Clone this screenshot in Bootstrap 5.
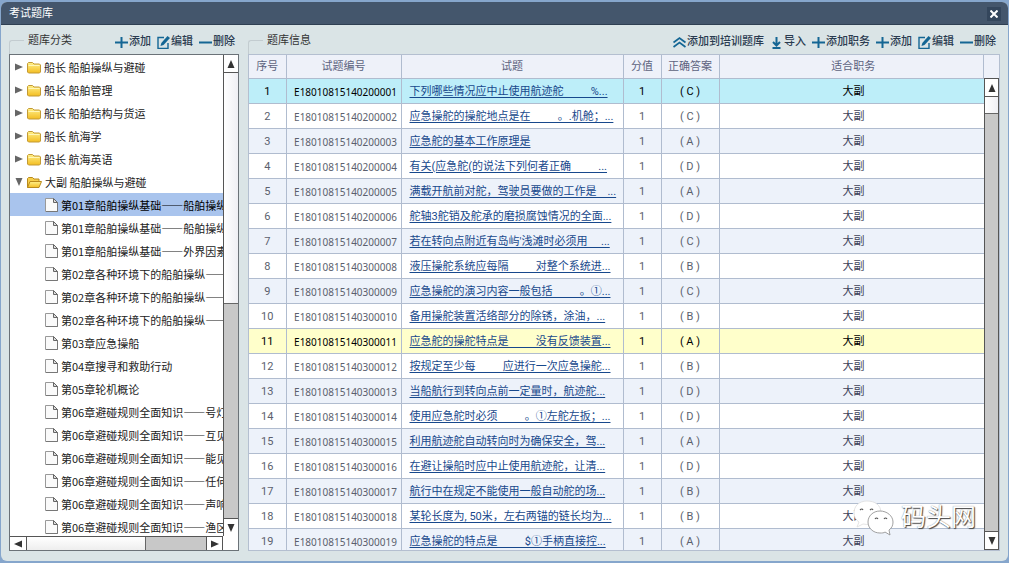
<!DOCTYPE html>
<html lang="zh-CN">
<head>
<meta charset="utf-8">
<meta name="viewport" content="width=device-width, initial-scale=1">
<title>考试题库</title>
<link href="https://cdn.jsdelivr.net/npm/bootstrap@5.3.0/dist/css/bootstrap.min.css" rel="stylesheet">
<style>
  body { font: 11px/22px Roboto, "Noto Sans CJK SC", sans-serif; color: #333; background: #86a6cc; }
  .win { background: #dae4e6; border-radius: 6px; margin: 2px 1px 2px 1px; }
  .titlebar { height: 23px; background: #44566c; border-bottom: 1px solid #2f3f52; border-radius: 6px 6px 0 0; color: #fff; padding: 1px 7px 0 8px; }
  .close-btn { width: 14px; height: 14px; background: #34465c; }
  .work { padding: 5px 8px 10px 8px; gap: 9px; }
  .side { width: 230px; }
  .group-head { height: 24px; padding-right: 4px; }
  .group-edge { width: 15px; height: 14px; border: 1px solid #c3ccd0; border-width: 1px 0 0 1px; border-radius: 3px 0 0 0; margin-top: 10px; margin-right: 4px; }
  .tool { display: flex; align-items: center; gap: 1px; padding: 0; border: 0; background: none; color: #2a3b50; font-weight: 500; line-height: 22px; white-space: nowrap; }
  .tool svg { width: 13px; height: 13px; fill: none; stroke: #146694; stroke-width: 2; }
  .tools { gap: 6px; }
  .tree-box { border: 1px solid #6b7278; background: #fff; }
  .tree { font-family: "Noto Sans CJK SC", sans-serif; }
  .tree a { display: flex; align-items: center; height: 23px; padding-top: 1px; color: #222; text-decoration: none; white-space: nowrap; padding-left: 5px; }
  .tree a.leaf { padding-left: 35px; }
  .tree a.chosen { background: #a9c4ed; color: #000; }
  .tree svg { flex: none; }
  .tree .gutter { margin: 0 3px 0 4px; }
  .tree .label { padding-left: 3px; }
  .sb { background: #c8c8c8; border: 0 solid #555; }
  .sb button { padding: 0; border: 0 solid #555; background: #fff; display: flex; align-items: center; justify-content: center; flex: none; }
  .sb svg { fill: #333; }
  .sb .thumb { border: 0 solid #666; flex: none; }
  .sb-v { width: 15px; border-left-width: 1px; }
  .sb-v button { height: 18px; width: 14px; }
  .sb-v .up, .sb-v .thumb { border-bottom-width: 1px; }
  .sb-v .down { border-top-width: 1px; margin-top: auto; }
  .sb-v .thumb { background: linear-gradient(90deg, #fff, #efeff4); }
  .sb-h { height: 14px; border-top-width: 1px; margin-right: 15px; }
  .sb-h button { width: 17px; height: 13px; }
  .sb-h .lf, .sb-h .thumb { border-right-width: 1px; }
  .sb-h .rt { border-left-width: 1px; border-right-width: 1px; margin-left: auto; }
  .sb-h .thumb { background: linear-gradient(#fff, #eee); width: 56%; }
  .side .sb-v .thumb { height: 48%; }
  .grid-box { border: 1px solid #b4bfd0; background: #fff; }
  .grid-box .sb-v { margin-top: 23px; width: 15px; border-right-width: 1px; border-top-width: 1px; border-bottom-width: 1px; }
  .grid-box .sb-v button { width: 13px; }
  .grid-box .sb-v .thumb { height: 17px; }
  .grid-side { background: #eef1f9; }
  .q { table-layout: fixed; width: 100%; color: #5b5f6d; }
  .q th, .q td { height: 25px; padding: 2px 0 0; text-align: center; border-right: 1px solid #b0bccf; border-bottom: 1px solid #b0bccf; line-height: 22px; white-space: pre; overflow: hidden; font-weight: 400; }
  .q th { height: 23px; line-height: 20px; background: #eef1f9; color: #5d6380; }
  .q td:nth-child(2) { font-family: "Noto Sans", sans-serif; font-size: 10px; padding-left: 4px; }
  .q td:nth-child(3) { text-align: left; padding-left: 8px; }
  .q th:last-child, .q td:last-child { padding-left: 4px; }
  .q td:last-child { border-right: 0; color: #3e4258; }
  .q a { color: #17488c; text-decoration: underline; text-underline-offset: 2px; }
  .q tbody tr:nth-child(odd) { background: #edf2fa; }
  .q tbody tr.current { background: #bdeef9; color: #000; }
  .q tbody tr.hovered { background: #ffffcb; color: #000; }
  .q tr.current td:last-child, .q tr.hovered td:last-child { color: #000; }
  .brand { position: absolute; right: 32px; bottom: 25px; gap: 6px; pointer-events: none; }
  .brand span { font-size: 25px; line-height: 36px; color: #fff; text-shadow: 1px 1px 1px #444, 0 0 1px #777; }
</style>
</head>
<body class="vh-100 overflow-hidden d-flex flex-column">
<svg class="position-absolute" width="0" height="0">
  <symbol id="plus" viewBox="0 0 13 13"><path d="M6.5 1v11M0 6.5h13"/></symbol>
  <symbol id="minus" viewBox="0 0 13 13"><path d="M0 6.5h13"/></symbol>
  <symbol id="edit" viewBox="0 0 13 13"><path stroke-width="1.4" d="M7 1.5H1v11h10V7"/><path fill="#146694" stroke="none" d="M3.5 10l.8-3L10.500 0l2.500 2L6.500 9z"/></symbol>
  <symbol id="chev" viewBox="0 0 13 13"><path stroke-width="1.700" d="M.5 6.500l6-4.500 6 4.500M.5 11l6-4.500 6 4.500"/></symbol>
  <symbol id="down" viewBox="0 0 13 13"><path d="M6.500 1v8M3 6l3.500 3.500L10 6M2.500 12h8"/></symbol>
  <symbol id="tu" viewBox="0 0 8 8"><path d="M4 0l3.500 8h-7z"/></symbol>
  <symbol id="td" viewBox="0 0 8 8"><path d="M4 8L.5 0h7z"/></symbol>
  <symbol id="tl" viewBox="0 0 8 8"><path d="M0 4L8 .5v7z"/></symbol>
  <symbol id="tr" viewBox="0 0 8 8"><path d="M8 4L0 .5v7z"/></symbol>
  <linearGradient id="gold" x2="0" y2="1"><stop stop-color="#fff08a"/><stop offset="1" stop-color="#f3bd22"/></linearGradient>
  <symbol id="folder" viewBox="0 0 14 13"><path fill="url(#gold)" stroke="#c39a35" d="M.5 11V2.500l1-1h4l1.500 1.500h5.500l1 1V11l-1 1h-11z"/><path stroke="#fff7b8" d="M1.500 4.500h11"/></symbol>
  <symbol id="opened" viewBox="0 0 15 13"><path fill="#f7cf4a" stroke="#b98a1c" d="M.5 11.500v-9l1-1h4l1.500 1.500h5v2.500"/><path fill="url(#gold)" stroke="#b98a1c" d="M.5 11.500l2.500-6h11.500l-2.500 6z"/></symbol>
  <symbol id="page" viewBox="0 0 13 14"><path fill="#fafafa" stroke="#999" d="M.5.500h8l4 4v9H.5z"/><path fill="#ddd" stroke="#666" d="M8.500.500v4h4z"/><path stroke="#777" d="M12.500 4v9.500H1"/></symbol>
</svg>

<main class="win flex-grow-1 d-flex flex-column position-relative" style="min-height:0">
  <header class="titlebar d-flex justify-content-between align-items-center">
    <span>考试题库</span>
    <button class="close-btn border-0 p-0 d-flex align-items-center justify-content-center" aria-label="关闭"><svg width="8" height="8" viewBox="0 0 8 8" stroke="#fff" stroke-width="2"><path d="M.5.500l7 7M7.500.500l-7 7"/></svg></button>
  </header>

  <div class="work d-flex flex-grow-1" style="min-height:0">
    <section class="side d-flex flex-column flex-shrink-0">
      <div class="group-head d-flex">
        <i class="group-edge"></i><span>题库分类</span>
        <div class="tools d-flex ms-auto">
          <button class="tool"><svg><use href="#plus"/></svg>添加</button>
          <button class="tool"><svg><use href="#edit"/></svg>编辑</button>
          <button class="tool"><svg><use href="#minus"/></svg>删除</button>
        </div>
      </div>
      <div class="tree-box flex-grow-1 d-flex flex-column overflow-hidden">
        <div class="d-flex flex-grow-1" style="min-height:0">
          <nav class="tree flex-grow-1 overflow-hidden" id="tree"></nav>
          <div class="sb sb-v d-flex flex-column flex-shrink-0">
            <button class="up" aria-label="向上"><svg width="8" height="8"><use href="#tu"/></svg></button>
            <div class="thumb"></div>
            <button class="down" aria-label="向下"><svg width="8" height="8"><use href="#td"/></svg></button>
          </div>
        </div>
        <div class="sb sb-h d-flex flex-shrink-0">
          <button class="lf" aria-label="向左"><svg width="8" height="8"><use href="#tl"/></svg></button>
          <div class="thumb"></div>
          <button class="rt" aria-label="向右"><svg width="8" height="8"><use href="#tr"/></svg></button>
        </div>
      </div>
    </section>

    <section class="flex-grow-1 d-flex flex-column" style="min-width:0">
      <div class="group-head d-flex">
        <i class="group-edge"></i><span>题库信息</span>
        <div class="tools d-flex ms-auto">
          <button class="tool"><svg><use href="#chev"/></svg>添加到培训题库</button>
          <button class="tool"><svg><use href="#down"/></svg>导入</button>
          <button class="tool"><svg><use href="#plus"/></svg>添加职务</button>
          <button class="tool"><svg><use href="#plus"/></svg>添加</button>
          <button class="tool"><svg><use href="#edit"/></svg>编辑</button>
          <button class="tool"><svg><use href="#minus"/></svg>删除</button>
        </div>
      </div>
      <div class="grid-box flex-grow-1 d-flex" style="min-height:0">
        <div class="flex-grow-1 overflow-hidden">
          <table class="q">
            <colgroup><col style="width:37px"><col style="width:115px"><col style="width:222px"><col style="width:38px"><col style="width:58px"><col></colgroup>
            <thead><tr><th>序号</th><th>试题编号</th><th>试题</th><th>分值</th><th>正确答案</th><th>适合职务</th></tr></thead>
            <tbody id="rows"></tbody>
          </table>
        </div>
        <div class="grid-side d-flex flex-shrink-0">
          <div class="sb sb-v d-flex flex-column">
            <button class="up" aria-label="向上"><svg width="8" height="8"><use href="#tu"/></svg></button>
            <div class="thumb"></div>
            <button class="down" aria-label="向下"><svg width="8" height="8"><use href="#td"/></svg></button>
          </div>
        </div>
      </div>
    </section>
  </div>

  <div class="brand d-flex align-items-center">
    <svg width="42" height="36" viewBox="0 0 42 36" fill="#fff" stroke="#888" stroke-width=".8">
      <path stroke="#ddd" d="M14 1C6 1 1 6 1 13c0 4 2 7 5 9l-2 5 6-3c9 2 18-3 18-11S22 1 14 1z"/>
      <path d="M27 11c-7 0-12 5-12 11s5 11 12 11c2 0 4 0 5-1l5 3-1-5c3-2 4-5 4-8 0-6-6-11-13-11z"/>
      <path fill="none" stroke="#555" stroke-width="1.200" d="M7 10q2-2 3 0M17 10q2-2 3 0M22 19q1.500-2 3 0M31 19q1.500-2 3 0"/>
    </svg>
    <span>码头网</span>
  </div>
</main>

<script>
  const folders = ['船长 船舶操纵与避碰', '船长 船舶管理', '船长 船舶结构与货运', '船长 航海学', '船长 航海英语', '大副 船舶操纵与避碰'];
  const chapters = ['第01章船舶操纵基础——船舶操纵', '第01章船舶操纵基础——船舶操纵', '第01章船舶操纵基础——外界因素',
    '第02章各种环境下的船舶操纵——', '第02章各种环境下的船舶操纵——', '第02章各种环境下的船舶操纵——',
    '第03章应急操船', '第04章搜寻和救助行动', '第05章轮机概论', '第06章避碰规则全面知识——号灯',
    '第06章避碰规则全面知识——互见', '第06章避碰规则全面知识——能见', '第06章避碰规则全面知识——任何',
    '第06章避碰规则全面知识——声响', '第06章避碰规则全面知识——渔区'];
  const icon = (id, w, h, more = '') => `<svg width="${w}" height="${h}" fill="none" ${more}><use href="#${id}"/></svg>`;
  document.getElementById('tree').innerHTML =
    folders.map((t, i) => {
      const open = i === folders.length - 1;
      return `<a href="#">${icon(open ? 'td' : 'tr', 8, 8, 'style="fill:#666"')}<span class="gutter d-flex">${icon(open ? 'opened' : 'folder', open ? 15 : 14, 13)}</span>${t}</a>`;
    }).join('') +
    chapters.map((t, i) => `<a href="#" class="leaf${i ? '' : ' chosen'}">${icon('page', 13, 14)}<span class="label">${t}</span></a>`).join('');

  const gap = ' '.repeat(10);
  const questions = [
    ['下列哪些情况应中止使用航迹舵' + gap + '%...', 'C'], ['应急操舵的操舵地点是在' + gap + '。.机舱；...', 'C'],
    ['应急舵的基本工作原理是', 'A'], ['有关(应急舵(的说法下列何者正确' + gap + '...', 'D'],
    ['满载开航前对舵，驾驶员要做的工作是    ...', 'A'], ['舵轴3舵销及舵承的磨损腐蚀情况的全面...', 'D'],
    ["若在转向点附近有岛屿'浅滩时必须用     ...", 'C'], ['液压操舵系统应每隔' + gap + '对整个系统进...', 'B'],
    ['应急操舵的演习内容一般包括' + gap + '。①...', 'C'], ['备用操舵装置活络部分的除锈，涂油，...', 'B'],
    ['应急舵的操舵特点是' + gap + '没有反馈装置...', 'A'], ['按规定至少每' + gap + '应进行一次应急操舵...', 'B'],
    ['当船航行到转向点前一定量时，航迹舵...', 'D'], ['使用应急舵时必须' + gap + '。①左舵左扳；...', 'D'],
    ['利用航迹舵自动转向时为确保安全，驾...', 'A'], ['在避让操船时应中止使用航迹舵，让清...', 'D'],
    ['航行中在规定不能使用一般自动舵的场...', 'B'], ['某轮长度为, 50米，左右两锚的链长均为...', 'B'],
    ['应急操舵的特点是' + gap + '$①手柄直接控...', 'A']];
  document.getElementById('rows').innerHTML = questions.map(([q, a], i) => {
    const n = i + 1, code = 'E18010815140' + (n < 8 ? '2' : '3') + String(n).padStart(5, '0');
    return `<tr class="${n === 1 ? 'current' : n === 11 ? 'hovered' : ''}"><td>${n}</td><td>${code}</td><td><a href="#">${q}</a></td><td>1</td><td>( ${a} )</td><td>大副</td></tr>`;
  }).join('');
</script>
<script src="https://cdn.jsdelivr.net/npm/bootstrap@5.3.0/dist/js/bootstrap.bundle.min.js"></script>
</body>
</html>
